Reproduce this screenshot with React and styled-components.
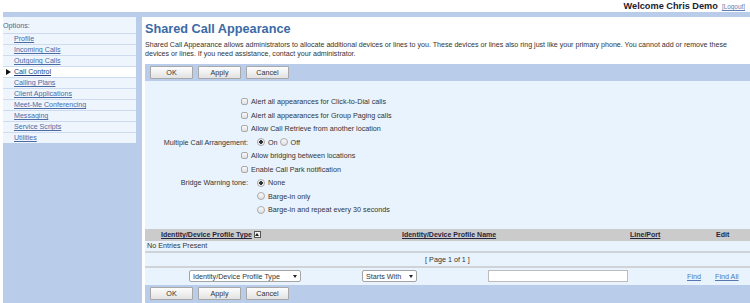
import React from "react";
import styled, { createGlobalStyle } from "styled-components";

const Global = createGlobalStyle`
  html, body { margin: 0; padding: 0; background: #fff; }
  body {
    font-family: "Liberation Sans", Arial, sans-serif;
    font-size: 7.2px;
    color: #333;
    overflow: hidden;
  }
  * { box-sizing: border-box; }
`;

const BLUE = "#b9ccea";
const LIGHT = "#e9f3fd";

const Page = styled.div`
  width: 750px;
  height: 303px;
  padding-left: 3px;
  display: flex;
  flex-direction: column;
`;

const Header = styled.div`
  height: 12px;
  display: flex;
  justify-content: flex-end;
  align-items: center;
  gap: 4px;
  padding-right: 5px;
`;

const Welcome = styled.span`
  font-size: 9.2px;
  font-weight: bold;
  color: #1c1c2e;
`;

const Logout = styled.a`
  font-size: 6.4px;
  color: #5d7db5;
  text-decoration: underline;
  margin-top: 1px;
`;

const Strip = styled.div`
  height: 5px;
  background: ${BLUE};
`;

const Body = styled.div`
  flex: 1;
  display: flex;
  align-items: stretch;
  gap: 6px;
  background: ${BLUE};
`;

const Sidebar = styled.nav`
  width: 133px;
  align-self: flex-start;
  background: #eef5fd;
`;

const OptionsTitle = styled.div`
  height: 16px;
  display: flex;
  align-items: center;
  color: #4d6594;
  padding-top: 1px;
`;

const NavRow = styled.div`
  height: 11px;
  display: flex;
  align-items: center;
  border-top: 1px solid #cddbf0;
  background: ${(p) => (p.$active ? "#ffffff" : "transparent")};
`;

const Arrow = styled.span`
  width: 11px;
  display: flex;
  justify-content: center;
  &::before {
    content: "";
    display: ${(p) => (p.$show ? "block" : "none")};
    border-left: 5px solid #111;
    border-top: 3px solid transparent;
    border-bottom: 3px solid transparent;
  }
`;

const NavLink = styled.a`
  color: ${(p) => (p.$active ? "#223f7a" : "#4b6ba6")};
  text-decoration: underline;
  font-size: 7.1px;
`;

const Main = styled.main`
  flex: 1;
  background: #fff;
  padding-left: 3px;
  display: flex;
  flex-direction: column;
`;

const Title = styled.h1`
  margin: 5px 0 0 0;
  font-size: 12.7px;
  line-height: 15px;
  font-weight: bold;
  color: #3a6aa6;
`;

const Desc = styled.p`
  margin: 4px 0 0 0;
  line-height: 9px;
  font-size: 7.1px;
  color: #333;
`;

const ButtonBar = styled.div`
  height: ${(p) => (p.$bottom ? "18px" : "17px")};
  margin-top: ${(p) => (p.$bottom ? "0" : "5px")};
  background: ${BLUE};
  display: flex;
  align-items: ${(p) => (p.$bottom ? "flex-start" : "center")};
  padding: ${(p) => (p.$bottom ? "2px 5px 0" : "0 5px")};
  gap: 5px;
`;

const Button = styled.button`
  width: 43px;
  height: 13px;
  padding: 0;
  font-family: inherit;
  font-size: 7.2px;
  color: #333;
  border: 1px solid #a8a8a8;
  border-radius: 1px;
  background: linear-gradient(#fdfdfd, #e2e2e2);
`;

const Content = styled.div`
  background: ${LIGHT};
  padding-top: 14px;
  flex: 1;
  display: flex;
  flex-direction: column;
`;

const FormGrid = styled.div`
  display: grid;
  grid-template-columns: 103px 1fr;
  column-gap: 3px;
  grid-auto-rows: 13.5px;
  align-items: center;
`;

const LeftCell = styled.div`
  display: flex;
  justify-content: flex-end;
  align-items: center;
`;

const RightCell = styled.div`
  display: flex;
  align-items: center;
  gap: 2px;
  padding-left: ${(p) => (p.$indent ? "6px" : "0")};
`;

const Check = styled.input.attrs({ type: "checkbox" })`
  appearance: none;
  margin: 0;
  width: 7px;
  height: 7px;
  border: 1px solid #a9a9a9;
  border-radius: 2px;
  background: linear-gradient(#fbfbfb, #dedede);
`;

const Radio = styled.input.attrs({ type: "radio" })`
  appearance: none;
  margin: 0 1px 0 0;
  width: 8px;
  height: 8px;
  border: 1px solid #a9a9a9;
  border-radius: 50%;
  background: ${(p) =>
    p.checked
      ? "radial-gradient(circle, #333 0 1.6px, #f4f4f4 2px)"
      : "linear-gradient(#fbfbfb, #dedede)"};
`;

const Label = styled.label`
  color: #333;
  white-space: nowrap;
`;

const Table = styled.div`
  margin-top: 12px;
  display: flex;
  flex-direction: column;
`;

const HeadRow = styled.div`
  height: 12px;
  background: #cbcbcb;
  display: grid;
  grid-template-columns: 241px 228px 86px 1fr;
  padding-left: 16px;
  align-items: center;
`;

const HeadLink = styled.a`
  font-weight: bold;
  font-size: 7px;
  color: #262640;
  text-decoration: ${(p) => (p.$plain ? "none" : "underline")};
  display: flex;
  align-items: center;
  gap: 2px;
`;

const SortIcon = styled.span`
  width: 7px;
  height: 7px;
  border: 1px solid #555;
  background: #eee;
  display: inline-flex;
  align-items: center;
  justify-content: center;
  &::before {
    content: "";
    border-bottom: 3px solid #222;
    border-left: 2px solid transparent;
    border-right: 2px solid transparent;
  }
`;

const EmptyRow = styled.div`
  height: 10px;
  display: flex;
  align-items: center;
  padding-left: 2px;
`;

const Divider = styled.div`
  height: 2px;
  background: #cfd3d8;
`;

const PageRow = styled.div`
  height: 13px;
  display: flex;
  align-items: center;
  justify-content: center;
`;

const SearchRow = styled.div`
  height: 17px;
  display: grid;
  grid-template-columns: 173px 126px 199px 28px 1fr;
  padding-left: 44px;
  align-items: center;
`;

const SelectBox = styled.div`
  width: ${(p) => p.$w}px;
  height: 12px;
  background: #fff;
  border: 1px solid #a4a4a4;
  border-radius: 2px;
  display: flex;
  align-items: center;
  justify-content: space-between;
  padding: 0 3px 0 3px;
  color: #333;
`;

const Caret = styled.span`
  border-top: 3px solid #222;
  border-left: 2px solid transparent;
  border-right: 2px solid transparent;
`;

const TextInput = styled.input`
  width: 140px;
  height: 12px;
  border: 1px solid #bdbdbd;
  background: #fff;
  padding: 0;
  margin: 0;
`;

const FindLink = styled.a`
  color: #5476b1;
  text-decoration: underline;
`;

const navItems = [
  "Profile",
  "Incoming Calls",
  "Outgoing Calls",
  "Call Control",
  "Calling Plans",
  "Client Applications",
  "Meet-Me Conferencing",
  "Messaging",
  "Service Scripts",
  "Utilities",
];

const Buttons = ({ bottom }) => (
  <ButtonBar $bottom={bottom}>
    <Button>OK</Button>
    <Button>Apply</Button>
    <Button>Cancel</Button>
  </ButtonBar>
);

const CheckRow = ({ label }) => (
  <>
    <LeftCell>
      <Check />
    </LeftCell>
    <RightCell>
      <Label>{label}</Label>
    </RightCell>
  </>
);

export default function App() {
  return (
    <Page>
      <Global />
      <Header>
        <Welcome>Welcome Chris Demo</Welcome>
        <Logout>[Logout]</Logout>
      </Header>
      <Strip />
      <Body>
        <Sidebar>
          <OptionsTitle>Options:</OptionsTitle>
          {navItems.map((n) => (
            <NavRow key={n} $active={n === "Call Control"}>
              <Arrow $show={n === "Call Control"} />
              <NavLink $active={n === "Call Control"}>{n}</NavLink>
            </NavRow>
          ))}
        </Sidebar>
        <Main>
          <Title>Shared Call Appearance</Title>
          <Desc>
            Shared Call Appearance allows administrators to allocate additional devices or lines to
            you. These devices or lines also ring just like your primary phone. You cannot add or
            remove these devices or lines. If you need assistance, contact your administrator.
          </Desc>
          <Buttons />
          <Content>
            <FormGrid>
              <CheckRow label="Alert all appearances for Click-to-Dial calls" />
              <CheckRow label="Alert all appearances for Group Paging calls" />
              <CheckRow label="Allow Call Retrieve from another location" />
              <LeftCell>
                <Label>Multiple Call Arrangement:</Label>
              </LeftCell>
              <RightCell $indent>
                <Radio checked readOnly name="mca" />
                <Label>On</Label>
                <Radio readOnly name="mca" />
                <Label>Off</Label>
              </RightCell>
              <CheckRow label="Allow bridging between locations" />
              <CheckRow label="Enable Call Park notification" />
              <LeftCell>
                <Label>Bridge Warning tone:</Label>
              </LeftCell>
              <RightCell $indent>
                <Radio checked readOnly name="bw" />
                <Label>None</Label>
              </RightCell>
              <div />
              <RightCell $indent>
                <Radio readOnly name="bw" />
                <Label>Barge-in only</Label>
              </RightCell>
              <div />
              <RightCell $indent>
                <Radio readOnly name="bw" />
                <Label>Barge-in and repeat every 30 seconds</Label>
              </RightCell>
            </FormGrid>
            <Table>
              <HeadRow>
                <HeadLink>
                  Identity/Device Profile Type <SortIcon />
                </HeadLink>
                <HeadLink>Identity/Device Profile Name</HeadLink>
                <HeadLink>Line/Port</HeadLink>
                <HeadLink $plain>Edit</HeadLink>
              </HeadRow>
              <EmptyRow>No Entries Present</EmptyRow>
              <Divider />
              <PageRow>[ Page 1 of 1 ]</PageRow>
              <Divider />
              <SearchRow>
                <SelectBox $w={112}>
                  Identity/Device Profile Type <Caret />
                </SelectBox>
                <SelectBox $w={55}>
                  Starts With <Caret />
                </SelectBox>
                <TextInput />
                <FindLink>Find</FindLink>
                <FindLink>Find All</FindLink>
              </SearchRow>
            </Table>
          </Content>
          <Buttons bottom />
        </Main>
      </Body>
    </Page>
  );
}
